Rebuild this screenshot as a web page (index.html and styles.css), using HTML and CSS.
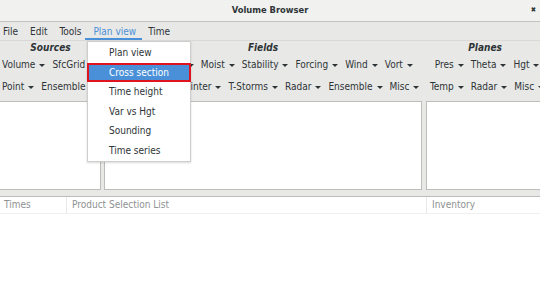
FILE: index.html
```html
<!DOCTYPE html>
<html lang="en">

<head>
  <meta charset="utf-8" />
  <title>Volume Browser</title>
  <link rel="stylesheet" href="styles.css">
</head>

<body>
  <div class="window">
    <header class="titlebar">
      <span></span>
      <span class="title">Volume Browser</span>
      <span class="close">&#x2716;</span>
    </header>

    <nav class="menubar">
      <span class="menu-item first">File</span>
      <span class="menu-item">Edit</span>
      <span class="menu-item">Tools</span>
      <span class="menu-item active">Plan view</span>
      <span class="menu-item">Time</span>
    </nav>

    <div class="panes">
      <section class="pane pane-sources">
        <h2>Sources</h2>
        <div class="tool-row">
          <span class="drop">Volume</span>
          <span class="drop">SfcGrid</span>
        </div>
        <div class="tool-row">
          <span class="drop">Point</span>
          <span class="drop">Ensemble</span>
        </div>
        <div class="list-box"></div>
      </section>

      <section class="pane">
        <h2>Fields</h2>
        <div class="tool-row">
          <!-- these two sit under the open popup -->
          <span class="drop covered">Height</span>
          <span class="drop covered">Temp</span>
          <span class="drop">Moist</span>
          <span class="drop">Stability</span>
          <span class="drop">Forcing</span>
          <span class="drop">Wind</span>
          <span class="drop">Vort</span>
        </div>
        <div class="tool-row">
          <span class="drop covered">Sfc</span>
          <span class="drop covered">Precip</span>
          <span class="drop">Winter</span>
          <span class="drop">T-Storms</span>
          <span class="drop">Radar</span>
          <span class="drop">Ensemble</span>
          <span class="drop">Misc</span>
        </div>
        <div class="list-box"></div>
      </section>

      <section class="pane pane-planes">
        <h2>Planes</h2>
        <div class="tool-row">
          <span class="drop">Pres</span>
          <span class="drop">Theta</span>
          <span class="drop">Hgt</span>
        </div>
        <div class="tool-row">
          <span class="drop">Temp</span>
          <span class="drop">Radar</span>
          <span class="drop">Misc</span>
        </div>
        <div class="list-box"></div>
      </section>
    </div>

    <div class="table">
      <div class="table-head">
        <span class="col col-times">Times</span>
        <span class="col col-product">Product Selection List</span>
        <span class="col col-inventory">Inventory</span>
      </div>
    </div>

    <!-- open "Plan view" menu, lies over the toolbars -->
    <ul class="popup">
      <li>Plan view</li>
      <li class="selected">Cross section</li>
      <li>Time height</li>
      <li>Var vs Hgt</li>
      <li>Sounding</li>
      <li>Time series</li>
    </ul>
  </div>
</body>

</html>
```

FILE: styles.css
```css
* {
  box-sizing: border-box;
}

body {
  margin: 0;
  background-color: #fff;
  color: #2e3436;
  font: 10px / 1.2 "DejaVu Sans Condensed", "DejaVu Sans", sans-serif;
}

.window {
  position: relative;
  width: 540px;
  height: 298px;
  overflow: hidden;
  background-color: #e8e8e7;
}

/* Title bar */
.titlebar {
  display: grid;
  grid-template-columns: 1fr auto 1fr;
  align-items: center;
  height: 22px;
  padding-bottom: 1px;
  background-color: #f1f1f0;
  border-bottom: 1px solid #c4c3c0;
}

.title {
  font-weight: bold;
  font-size: 9.3px;
}

.close {
  justify-self: end;
  padding-right: 4px;
  font-size: 7px;
  color: #2e3436;
}

/* Menu bar */
.menubar {
  display: flex;
  height: 19px;
  border-bottom: 1px solid #dad9d7;
}

.menu-item {
  padding: 2px 6px 0;
  line-height: 16px;
}

.menu-item.first {
  padding-left: 3px;
}

.menu-item.active {
  color: #4a90d9;
  box-shadow: inset 0 -2px 0 #4a90d9;
  margin-left: -2px;
  padding-left: 8px;
}

/* Source / field / plane panes */
.panes {
  display: grid;
  grid-template-columns: 101px 318px 1fr;
  column-gap: 3px;
}

.pane-planes {
  margin-left: 1px;
}

.pane h2 {
  margin: 0;
  height: 13px;
  font-size: 10px;
  line-height: 13px;
  font-weight: bold;
  font-style: italic;
  text-align: center;
}

.tool-row {
  display: flex;
  justify-content: center;
  gap: 7px;
  height: 22px;
  align-items: center;
  white-space: nowrap;
}

.pane-sources .tool-row {
  justify-content: flex-start;
  padding-left: 2px;
}

.pane-planes .tool-row {
  padding-left: 4px;
}

.drop {
  display: inline-flex;
  align-items: center;
  gap: 4px;
}

.drop::after {
  content: "";
  border-left: 3px solid transparent;
  border-right: 3px solid transparent;
  border-top: 3px solid #2e3436;
  margin-top: 1px;
  visibility: visible;
}

/* buttons hidden behind the popup keep their room in the row */
.drop.covered {
  visibility: hidden;
}

.list-box {
  height: 89px;
  margin-top: 3px;
  background-color: #fff;
  border: 1px solid #bebdbb;
}

.pane-sources .list-box {
  border-left: none;
}

/* Bottom table */
.table {
  margin-top: 6px;
  height: 110px;
  background-color: #fff;
  border-top: 1px solid #bebdbb;
}

.table-head {
  display: grid;
  grid-template-columns: 67px 360px 1fr;
  height: 17px;
  border-bottom: 1px solid #efefef;
  color: #8e9192;
}

.col {
  padding-left: 5px;
  line-height: 16px;
  border-right: 1px solid #e8e8e8;
}

.col-times {
  padding-left: 4px;
}

.col-inventory {
  border-right: none;
}

/* Popup menu */
.popup {
  position: absolute;
  left: 87px;
  top: 41px;
  width: 104px;
  margin: 0;
  padding: 1px 0;
  list-style: none;
  background-color: #fff;
  border: 1px solid #cfcecc;
  box-shadow: 0 1px 2px rgba(0, 0, 0, 0.15);
}

.popup li {
  height: 19.5px;
  line-height: 19.5px;
  padding-left: 21px;
}

.popup li.selected {
  color: #fff;
  background-color: #4a90d9;
  outline: 2px solid #e0141e;
  outline-offset: -2px;
  margin: 0 -1px;
  padding-left: 22px;
}
```
